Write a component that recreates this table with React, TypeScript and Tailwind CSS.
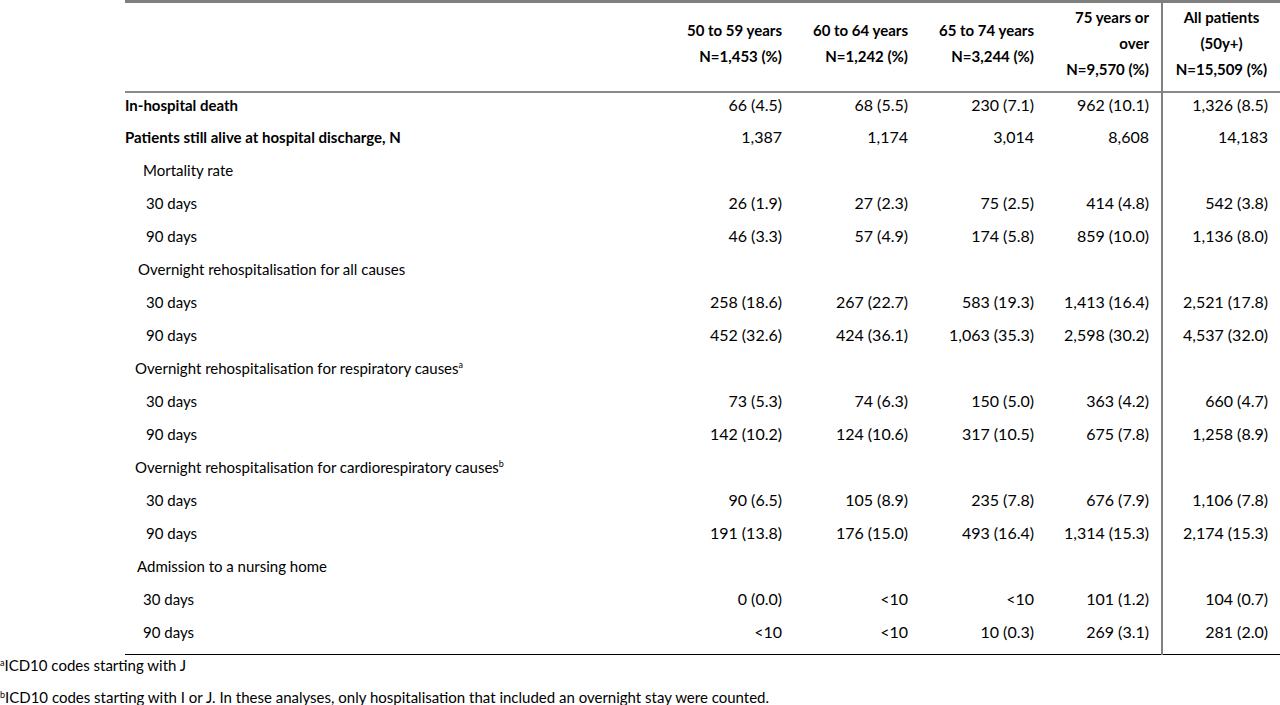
import React from 'react';

type Row = {
  label: string;
  sup?: string;
  bold?: boolean;
  indent: string;
  values?: string[];
};

const rows: Row[] = [
  { label: 'In-hospital death', bold: true, indent: 'pl-0', values: ['66 (4.5)', '68 (5.5)', '230 (7.1)', '962 (10.1)', '1,326 (8.5)'] },
  { label: 'Patients still alive at hospital discharge, N', bold: true, indent: 'pl-0', values: ['1,387', '1,174', '3,014', '8,608', '14,183'] },
  { label: 'Mortality rate', indent: 'pl-[18px]' },
  { label: '30 days', indent: 'pl-[21px]', values: ['26 (1.9)', '27 (2.3)', '75 (2.5)', '414 (4.8)', '542 (3.8)'] },
  { label: '90 days', indent: 'pl-[21px]', values: ['46 (3.3)', '57 (4.9)', '174 (5.8)', '859 (10.0)', '1,136 (8.0)'] },
  { label: 'Overnight rehospitalisation for all causes', indent: 'pl-[13px]' },
  { label: '30 days', indent: 'pl-[21px]', values: ['258 (18.6)', '267 (22.7)', '583 (19.3)', '1,413 (16.4)', '2,521 (17.8)'] },
  { label: '90 days', indent: 'pl-[21px]', values: ['452 (32.6)', '424 (36.1)', '1,063 (35.3)', '2,598 (30.2)', '4,537 (32.0)'] },
  { label: 'Overnight rehospitalisation for respiratory causes', sup: 'a', indent: 'pl-[10px]' },
  { label: '30 days', indent: 'pl-[21px]', values: ['73 (5.3)', '74 (6.3)', '150 (5.0)', '363 (4.2)', '660 (4.7)'] },
  { label: '90 days', indent: 'pl-[21px]', values: ['142 (10.2)', '124 (10.6)', '317 (10.5)', '675 (7.8)', '1,258 (8.9)'] },
  { label: 'Overnight rehospitalisation for cardiorespiratory causes', sup: 'b', indent: 'pl-[10px]' },
  { label: '30 days', indent: 'pl-[21px]', values: ['90 (6.5)', '105 (8.9)', '235 (7.8)', '676 (7.9)', '1,106 (7.8)'] },
  { label: '90 days', indent: 'pl-[21px]', values: ['191 (13.8)', '176 (15.0)', '493 (16.4)', '1,314 (15.3)', '2,174 (15.3)'] },
  { label: 'Admission to a nursing home', indent: 'pl-[12px]' },
  { label: '30 days', indent: 'pl-[18px]', values: ['0 (0.0)', '<10', '<10', '101 (1.2)', '104 (0.7)'] },
  { label: '90 days', indent: 'pl-[18px]', values: ['<10', '<10', '10 (0.3)', '269 (3.1)', '281 (2.0)'] },
];

const headers = [
  ['50 to 59 years', 'N=1,453 (%)'],
  ['60 to 64 years', 'N=1,242 (%)'],
  ['65 to 74 years', 'N=3,244 (%)'],
  ['75 years or', 'over', 'N=9,570 (%)'],
];

export default function App() {
  return (
    <div className="w-[1280px] h-[705px] bg-white text-black font-['Lato','Open_Sans',sans-serif] text-[15px] overflow-hidden">
      <table className="ml-[125px] w-[1155px] table-fixed border-collapse">
        <colgroup>
          <col className="w-[543px]" />
          <col className="w-[126px]" />
          <col className="w-[126px]" />
          <col className="w-[126px]" />
          <col className="w-[116px]" />
          <col className="w-[118px]" />
        </colgroup>
        <thead>
          <tr className="h-[90px] border-t-[3px] border-t-[#7f7f7f] border-b-[2px] border-b-[#8a8a8a]">
            <th />
            {headers.map((h, i) => (
              <th key={i} className="pr-3 pb-2 align-middle text-right font-bold leading-[26px]">
                {h.map((line) => (
                  <div key={line}>{line}</div>
                ))}
              </th>
            ))}
            <th className="pb-2 align-middle text-center font-bold leading-[26px] border-l-2 border-l-[#808080]">
              <div>All patients</div>
              <div>(50y+)</div>
              <div>N=15,509 (%)</div>
            </th>
          </tr>
        </thead>
        <tbody>
          {rows.map((r, i) => {
            const last = i === rows.length - 1;
            return (
              <tr key={i} className={last ? 'h-[35px] border-b border-b-black' : 'h-[33px]'}>
                <td className={`${r.indent} pt-[2px] align-top leading-5 whitespace-nowrap ${r.bold ? 'font-bold' : ''}`}>
                  {r.label}
                  {r.sup && <span className="relative -top-[6px] text-[9px] leading-none">{r.sup}</span>}
                </td>
                {[0, 1, 2, 3].map((c) => (
                  <td key={c} className="pr-3 pt-[2px] align-top text-right text-[16px] leading-5 whitespace-nowrap">
                    {r.values ? r.values[c] : ''}
                  </td>
                ))}
                <td className="pr-3 pt-[2px] align-top text-right text-[16px] leading-5 whitespace-nowrap border-l-2 border-l-[#808080]">
                  {r.values ? r.values[4] : ''}
                </td>
              </tr>
            );
          })}
        </tbody>
      </table>
      <div className="-mt-[6px] leading-8 text-[15px]">
        <p>
          <span className="relative -top-[5px] text-[9px] leading-none">a</span>ICD10 codes starting with J
        </p>
        <p>
          <span className="relative -top-[5px] text-[9px] leading-none">b</span>ICD10 codes starting with I or J. In these analyses, only hospitalisation that included an overnight stay were counted.
        </p>
      </div>
    </div>
  );
}
